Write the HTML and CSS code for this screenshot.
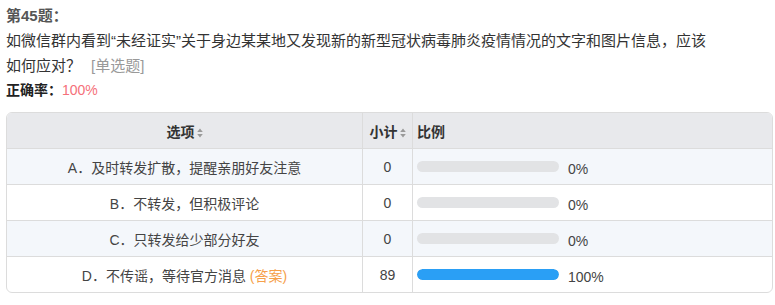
FILE: index.html
```html
<!DOCTYPE html>
<html lang="zh-CN">
<head>
  <meta charset="UTF-8">
  <title>第45题</title>
  <link rel="stylesheet" href="styles.css">
</head>
<body>
  <div class="question">
    <div class="q-title">第45题：</div>
    <div class="q-text">如微信群内看到“未经证实”关于身边某某地又发现新的新型冠状病毒肺炎疫情情况的文字和图片信息，应该如何应对？<span class="q-type">[单选题]</span></div>
    <div class="q-rate">正确率：<span class="rate-value">100%</span></div>

    <table class="result">
      <thead>
        <tr>
          <th class="col-option">选项<svg class="sort" width="6" height="10" viewBox="0 0 6 10"><path d="M3 0.5 L5.8 4 L0.2 4 Z M3 9.5 L5.8 6 L0.2 6 Z" fill="#9a9a9a"/></svg></th>
          <th class="col-count">小计<svg class="sort" width="6" height="10" viewBox="0 0 6 10"><path d="M3 0.5 L5.8 4 L0.2 4 Z M3 9.5 L5.8 6 L0.2 6 Z" fill="#9a9a9a"/></svg></th>
          <th class="col-ratio">比例</th>
        </tr>
      </thead>
      <tbody>
        <tr class="odd">
          <td class="col-option">A．及时转发扩散，提醒亲朋好友注意</td>
          <td class="col-count">0</td>
          <td class="col-ratio"><div class="ratio"><div class="bar"><div class="bar-fill" style="width: 0%"></div></div><span class="pct">0%</span></div></td>
        </tr>
        <tr>
          <td class="col-option">B．不转发，但积极评论</td>
          <td class="col-count">0</td>
          <td class="col-ratio"><div class="ratio"><div class="bar"><div class="bar-fill" style="width: 0%"></div></div><span class="pct">0%</span></div></td>
        </tr>
        <tr class="odd">
          <td class="col-option">C．只转发给少部分好友</td>
          <td class="col-count">0</td>
          <td class="col-ratio"><div class="ratio"><div class="bar"><div class="bar-fill" style="width: 0%"></div></div><span class="pct">0%</span></div></td>
        </tr>
        <tr class="last">
          <td class="col-option">D．不传谣，等待官方消息 <span class="answer">(答案)</span></td>
          <td class="col-count">89</td>
          <td class="col-ratio"><div class="ratio"><div class="bar"><div class="bar-fill" style="width: 100%"></div></div><span class="pct">100%</span></div></td>
        </tr>
      </tbody>
    </table>
  </div>
</body>
</html>
```

FILE: styles.css
```css
body {
  margin: 0;
  padding: 0;
  background-color: #fff;
  font-family: "Liberation Sans", "Noto Sans CJK SC", sans-serif;
  color: #333;
}
.question {
  padding: 3px 2px 0 6px;
}
.q-title {
  font-size: 15px;
  font-weight: bold;
  line-height: 25px;
  color: #555;
}
.q-text {
  font-size: 15px;
  line-height: 25px;
  max-width: 712px;
}
.q-type {
  color: #999;
  margin-left: 10px;
}
.q-rate {
  font-size: 14px;
  font-weight: bold;
  line-height: 24px;
  color: #222;
}
.rate-value {
  font-weight: normal;
  color: #f5707a;
}
.result {
  margin-top: 10px;
  width: 767px;
  border: 1px solid #dcdcdc;
  border-radius: 6px;
  border-spacing: 0;
  font-size: 14px;
  color: #444;
  overflow: hidden;
}
.result th {
  height: 35px;
  padding: 0 4px;
  background-color: #e8e9ec;
  font-weight: bold;
  color: #333;
  border-bottom: 1px solid #dcdcdc;
}
.result td {
  height: 35px;
  padding: 0 4px;
  border-bottom: 1px solid #dcdcdc;
}
.result tr.last td {
  border-bottom: none;
}
.result tr.odd td {
  background-color: #f4f7fb;
}
.col-option {
  width: 347px;
  text-align: center;
  border-right: 1px solid #dcdcdc;
}
.col-count {
  width: 41px;
  text-align: center;
  border-right: 1px solid #dcdcdc;
}
.col-ratio {
  text-align: left;
}
.sort {
  margin-left: 2px;
  vertical-align: -1px;
}
.ratio {
  display: flex;
  align-items: center;
}
.bar {
  width: 142px;
  height: 11px;
  border-radius: 6px;
  background-color: #e2e3e5;
  overflow: hidden;
}
.bar-fill {
  height: 100%;
  border-radius: 6px;
  background-color: #2a9ff5;
}
.pct {
  margin-left: 9px;
  margin-top: 5px;
}
.answer {
  color: #f6a04a;
}
```
